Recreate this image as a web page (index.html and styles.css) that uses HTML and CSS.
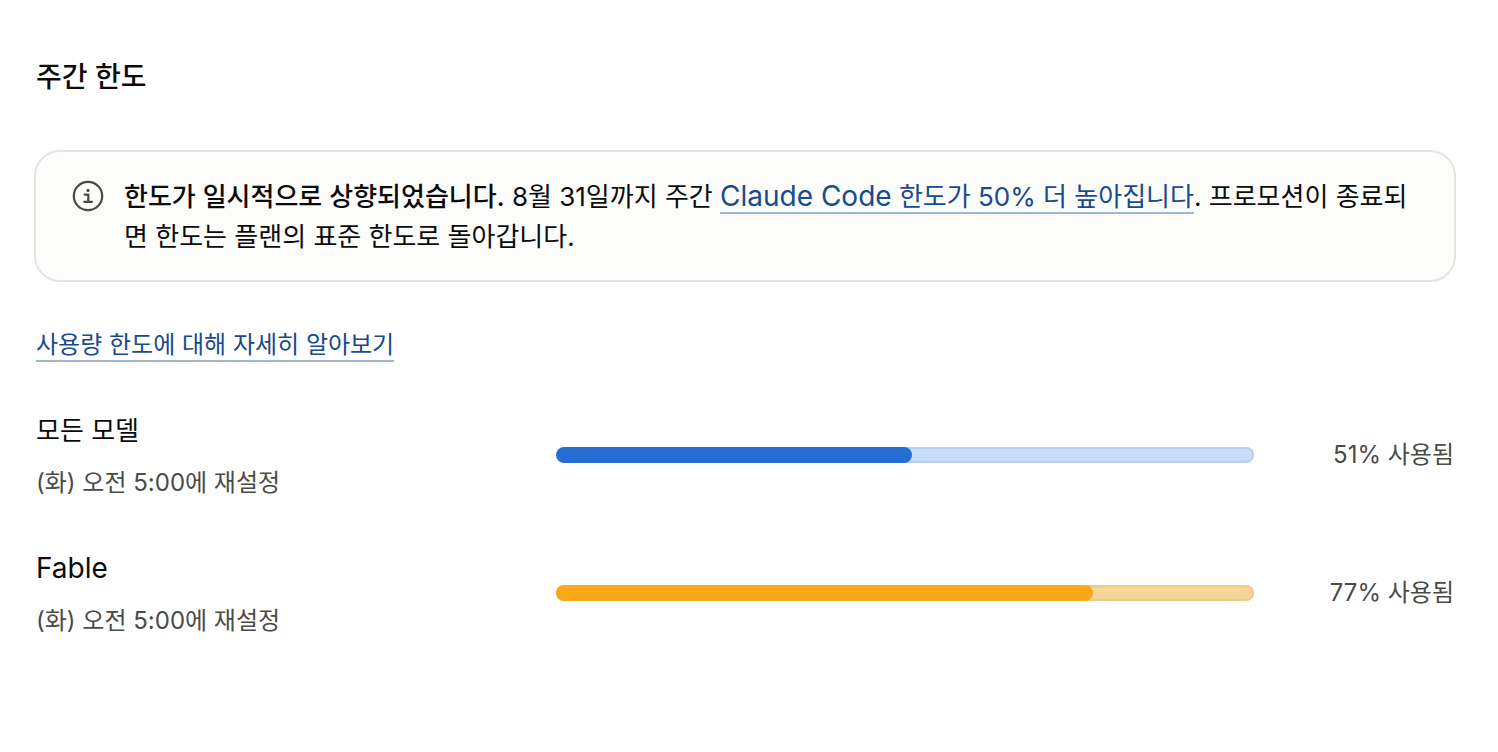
FILE: index.html
```html
<!DOCTYPE html>
<html lang="ko">
<head>
    <meta charset="UTF-8">
    <meta name="viewport" content="width=device-width, initial-scale=1.0">
    <title>주간 한도</title>
    <link rel="stylesheet" href="styles.css">
</head>
<body>
    <main class="container">
        <h1>주간 한도</h1>
        <div class="notice">
            <svg class="notice-icon" viewBox="0 0 32 32" fill="none" stroke="currentColor" stroke-width="2.2" aria-hidden="true">
                <circle cx="16" cy="16" r="14.2"/>
                <path d="M12.6 14.6h3.7v7M12.2 21.8h7.8" stroke-linecap="round" stroke-linejoin="round"/>
                <circle cx="16" cy="10.4" r="1.6" fill="currentColor" stroke="none"/>
            </svg>
            <p><strong>한도가 일시적으로 상향되었습니다.</strong> 8월 31일까지 주간 <a href="#"><span class="latin">Claude Code</span> 한도가 50% 더 높아집니다</a>. 프로모션이 종료되면 한도는 플랜의 표준 한도로 돌아갑니다.</p>
        </div>
        <a class="learn-more" href="#">사용량 한도에 대해 자세히 알아보기</a>
        <div class="usage-row">
            <div class="usage-info">
                <h2 id="all-models">모든 모델</h2>
                <p>(화) 오전 5:00에 재설정</p>
            </div>
            <div class="bar bar-blue" role="progressbar" aria-labelledby="all-models" aria-valuenow="51" aria-valuemin="0" aria-valuemax="100">
                <div class="bar-fill" style="width: 51%"></div>
            </div>
            <p class="usage-value">51% 사용됨</p>
        </div>
        <div class="usage-row">
            <div class="usage-info">
                <h2 id="fable"><span class="latin">Fable</span></h2>
                <p>(화) 오전 5:00에 재설정</p>
            </div>
            <div class="bar bar-orange" role="progressbar" aria-labelledby="fable" aria-valuenow="77" aria-valuemin="0" aria-valuemax="100">
                <div class="bar-fill" style="width: 77%"></div>
            </div>
            <p class="usage-value">77% 사용됨</p>
        </div>
    </main>
</body>
</html>
```
FILE: styles.css
```css
* {
    box-sizing: border-box;
}
body {
    margin: 0;
    background-color: #fff;
    color: #0b0b0b;
    font-family: Inter, "Noto Sans CJK KR", sans-serif;
    font-size: 26px;
    line-height: 40px;
}
h1, h2, p {
    margin: 0;
}
a {
    color: #184a8c;
    text-decoration: none;
    border-bottom: 2px solid #a0b4d3;
}
.latin {
    font-size: 28px;
    line-height: 32px;
}
.container {
    padding: 57px 42px 56px 34px;
}
h1 {
    margin: 0 2px 53px;
    font-size: 28px;
    font-weight: 500;
    line-height: 40px;
}
.notice {
    display: flex;
    gap: 20px;
    padding: 25px 36px 23px;
    border: 2px solid #e4e4e2;
    border-radius: 26px;
    background-color: #fcfcfb;
}
.notice-icon {
    flex: none;
    width: 32px;
    height: 32px;
    margin-top: 3px;
    color: #4a4a48;
}
.notice p {
    word-break: break-all;
}
.notice strong {
    font-weight: 500;
}
.learn-more {
    display: inline-block;
    margin: 48px 2px 47px;
    font-size: 24px;
    line-height: 30px;
}
.usage-row {
    display: grid;
    grid-template-columns: 488px 1fr 168px;
    gap: 32px;
    align-items: center;
    padding: 0 2px;
    margin-bottom: 46px;
}
.usage-info p, .usage-value {
    color: #4a4a48;
    font-size: 24px;
    line-height: 36px;
}
.usage-info h2 {
    font-size: 26px;
    font-weight: 400;
    line-height: 44px;
    margin-bottom: 12px;
}
.usage-value {
    text-align: right;
}
.bar {
    height: 16px;
    border-radius: 8px;
    overflow: hidden;
}
.bar-fill {
    height: 100%;
    border-radius: 8px;
}
.bar-blue {
    background-color: #c8ddf8;
    box-shadow: inset 0 0 0 2px #b9d0ee;
}
.bar-blue .bar-fill {
    background-color: #256dd2;
}
.bar-orange {
    background-color: #f8d69a;
    box-shadow: inset 0 0 0 2px #eccb8d;
}
.bar-orange .bar-fill {
    background-color: #faa719;
}
```
